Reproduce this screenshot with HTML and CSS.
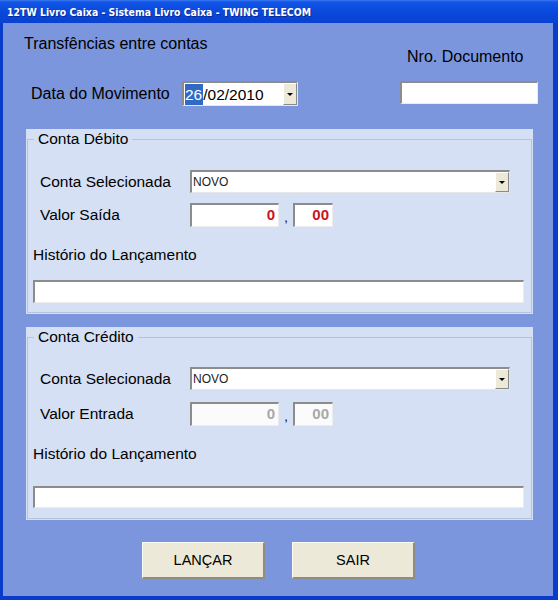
FILE: index.html
```html
<!DOCTYPE html>
<html lang="pt">
<head>
<meta charset="utf-8">
<title>12TW Livro Caixa</title>
<link rel="stylesheet" href="styles.css">
</head>
<body>
<div class="window">
  <div class="titlebar"><span class="title">12TW Livro Caixa - Sistema Livro Caixa - TWING TELECOM</span></div>
  <div class="client">
    <div class="top">
      <div class="top-left">
        <div class="heading">Transfências entre contas</div>
        <div class="date-row">
          <span class="date-label">Data do Movimento</span>
          <div class="datebox">
            <span class="date-text"><span class="sel">26</span>/02/2010</span>
            <span class="dd-btn"><span class="arrow"></span></span>
          </div>
        </div>
      </div>
      <div class="top-right">
        <div class="nro-label">Nro. Documento</div>
        <div class="field nro-input"></div>
      </div>
    </div>

    <div class="group g1">
      <fieldset class="frame">
        <legend class="legend">Conta Débito</legend>
        <div class="row row-combo">
          <span class="lbl">Conta Selecionada</span>
          <div class="combo"><span class="combo-text">NOVO</span><span class="dd-btn combo-btn"><span class="arrow"></span></span></div>
        </div>
        <div class="row row-valor">
          <span class="lbl">Valor Saída</span>
          <div class="field num-int red">0</div>
          <span class="comma">,</span>
          <div class="field num-dec red">00</div>
        </div>
        <div class="hist-label">Histório do Lançamento</div>
        <div class="field hist-input"></div>
      </fieldset>
    </div>

    <div class="group g2">
      <fieldset class="frame">
        <legend class="legend">Conta Crédito</legend>
        <div class="row row-combo">
          <span class="lbl">Conta Selecionada</span>
          <div class="combo"><span class="combo-text">NOVO</span><span class="dd-btn combo-btn"><span class="arrow"></span></span></div>
        </div>
        <div class="row row-valor">
          <span class="lbl">Valor Entrada</span>
          <div class="field num-int disabled">0</div>
          <span class="comma">,</span>
          <div class="field num-dec disabled">00</div>
        </div>
        <div class="hist-label">Histório do Lançamento</div>
        <div class="field hist-input"></div>
      </fieldset>
    </div>

    <div class="buttons">
      <div class="btn">LANÇAR</div>
      <div class="btn">SAIR</div>
    </div>
  </div>
</div>
</body>
</html>
```

FILE: styles.css
```css
* { box-sizing: border-box; }
html, body { margin: 0; padding: 0; }
body {
  width: 558px;
  height: 600px;
  overflow: hidden;
  font-family: "Liberation Sans", Arial, sans-serif;
  color: #000;
  background: #0a3ccb;
}
.window {
  width: 558px;
  height: 600px;
  display: flex;
  flex-direction: column;
  background: #0a3ccb;
}
.titlebar {
  height: 23px;
  flex: none;
  background: linear-gradient(#3a78f0 0, #1356e6 2px, #0a4cdf 40%, #0845d8 70%, #0a42d2 100%);
  padding-left: 7px;
  display: flex;
  align-items: center;
}
.title {
  color: #fff;
  font-family: "DejaVu Sans Condensed", "DejaVu Sans", sans-serif;
  font-stretch: condensed;
  font-weight: bold;
  font-size: 10.4px;
  text-shadow: 1px 1px 0 #0a2a90;
  white-space: nowrap;
  margin-top: 1px;
}
.client {
  flex: 1;
  margin: 0 5px 4px 3px;
  background: #7b96dd;
  padding-top: 12px;
}
/* top area */
.top {
  display: flex;
  justify-content: space-between;
  padding: 0 15px 0 21px;
}
.heading {
  font-size: 16px;
  line-height: 18px;
}
.date-row {
  display: flex;
  align-items: center;
  margin-top: 28px;
  margin-left: 7px;
}
.date-label {
  width: 151px;
  font-size: 16px;
  line-height: 18px;
}
.datebox {
  width: 116px;
  height: 25px;
  background: #fff;
  border-style: solid;
  border-width: 2px 1px 1px 2px;
  border-color: #8c8c8c #e6e6e6 #e6e6e6 #8c8c8c;
  display: flex;
  align-items: center;
  justify-content: space-between;
  padding-left: 1px;
}
.date-text {
  font-size: 15.5px;
  line-height: 21px;
}
.sel {
  background: #316ac5;
  color: #fff;
  display: inline-block;
  padding-right: 1px;
}
.dd-btn {
  width: 14px;
  height: 100%;
  background: #ece9d8;
  border-style: solid;
  border-width: 1px;
  border-color: #fff #8a8a8a #8a8a8a #fff;
  display: flex;
  align-items: center;
  justify-content: center;
}
.arrow {
  width: 0;
  height: 0;
  border-left: 3px solid transparent;
  border-right: 3px solid transparent;
  border-top: 3px solid #000;
}
.top-right {
  width: 138px;
}
.nro-label {
  font-size: 16px;
  line-height: 18px;
  margin-top: 13px;
  padding-left: 7px;
}
.field {
  background: #fff;
  border-style: solid;
  border-width: 2px 1px 1px 2px;
  border-color: #8c8c8c #ececec #ececec #8c8c8c;
}
.nro-input {
  margin-top: 15px;
  height: 23px;
}
/* groups */
.group {
  margin-left: 23px;
  width: 507px;
  background: #d6e0f4;
  padding: 2px 1px 1px 1px;
}
.g1 { margin-top: 23px; }
.g2 { margin-top: 13px; }
.g2 .frame { padding-bottom: 10px; }
.frame {
  margin: 0;
  border: 1px solid #b7c3dc;
  padding: 0 5px 9px 5px;
  min-width: 0;
}
.legend {
  font-size: 15.5px;
  line-height: 16px;
  padding: 0 4px;
  margin-left: 1px;
}
.row {
  display: flex;
  align-items: center;
  padding-left: 7px;
}
.lbl {
  width: 150px;
  font-size: 15.5px;
  line-height: 18px;
}
.row-combo { margin-top: 23px; }
.g2 .row-combo { margin-top: 22px; }
.combo {
  width: 320px;
  height: 23px;
  background: #fff;
  border-style: solid;
  border-width: 2px 1px 1px 2px;
  border-color: #8c8c8c #e6e6e6 #e6e6e6 #8c8c8c;
  display: flex;
  align-items: center;
  justify-content: space-between;
}
.combo-text {
  font-size: 12px;
  color: #222;
  padding-left: 1px;
}
.combo-btn { width: 14px; }
.row-valor { margin-top: 10px; }
.g2 .row-valor { margin-top: 12px; }
.num-int, .num-dec {
  height: 24px;
  text-align: right;
  font-size: 15px;
  font-weight: bold;
  line-height: 20px;
  padding-right: 3px;
}
.num-int { width: 89px; }
.num-dec { width: 40px; }
.comma {
  width: 14px;
  text-align: center;
  font-size: 13px;
  align-self: flex-end;
  line-height: 18px;
}
.red { color: #c8141e; }
.disabled { color: #a8a8a8; background: #fbfbfb; }
.hist-label {
  font-size: 15.5px;
  line-height: 16px;
  margin-top: 20px;
}
.hist-input {
  margin-top: 17px;
  width: 491px;
  height: 23px;
}
.g2 .hist-input { margin-top: 24px; height: 22px; }
/* buttons */
.buttons {
  display: flex;
  justify-content: center;
  gap: 27px;
  margin-top: 22px;
  padding-left: 1px;
}
.btn {
  width: 123px;
  height: 37px;
  background: #ece9d8;
  border-style: solid;
  border-width: 1px 2px 2px 1px;
  border-color: #fbfaf4 #8f8d82 #8f8d82 #fbfaf4;
  display: flex;
  align-items: center;
  justify-content: center;
  font-size: 14.5px;
}
```
